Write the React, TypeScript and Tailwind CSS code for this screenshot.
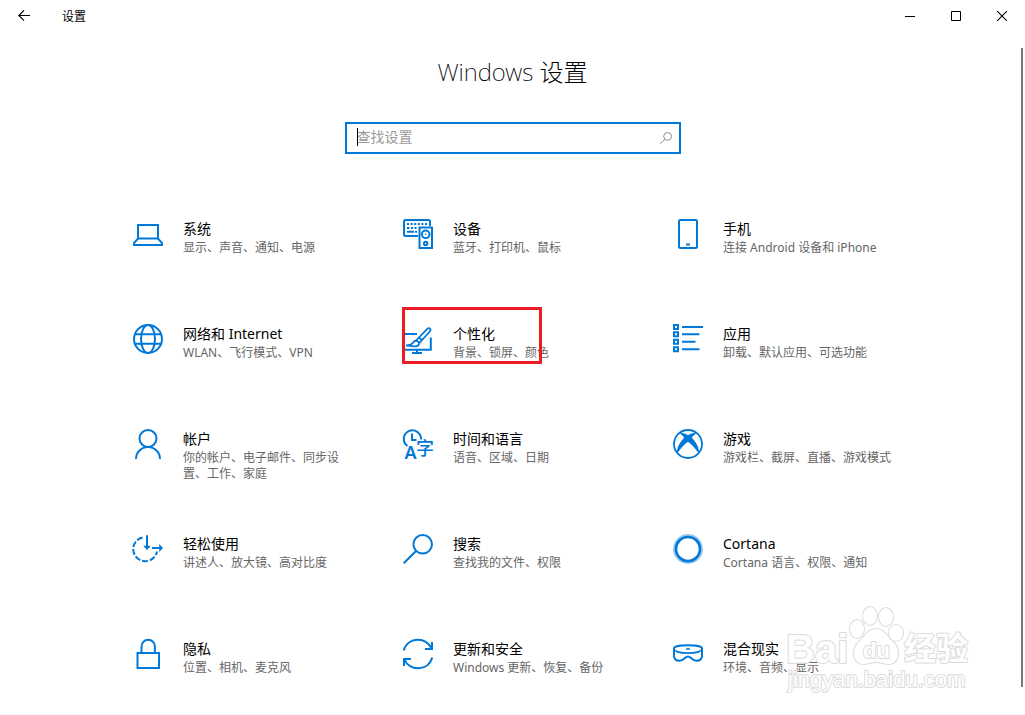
import type { ReactNode } from 'react';

interface Category {
  title: string;
  description: string;
  icon: ReactNode;
  marked?: boolean;
}

const CATEGORIES: Category[] = [
  { title: '系统', description: '显示、声音、通知、电源', icon: <LaptopIcon /> },
  { title: '设备', description: '蓝牙、打印机、鼠标', icon: <DevicesIcon /> },
  { title: '手机', description: '连接 Android 设备和 iPhone', icon: <PhoneIcon /> },
  { title: '网络和 Internet', description: 'WLAN、飞行模式、VPN', icon: <GlobeIcon /> },
  { title: '个性化', description: '背景、锁屏、颜色', icon: <PersonalizeIcon />, marked: true },
  { title: '应用', description: '卸载、默认应用、可选功能', icon: <AppsIcon /> },
  { title: '帐户', description: '你的帐户、电子邮件、同步设置、工作、家庭', icon: <AccountIcon /> },
  { title: '时间和语言', description: '语音、区域、日期', icon: <TimeLanguageIcon /> },
  { title: '游戏', description: '游戏栏、截屏、直播、游戏模式', icon: <GamingIcon /> },
  { title: '轻松使用', description: '讲述人、放大镜、高对比度', icon: <EaseOfAccessIcon /> },
  { title: '搜索', description: '查找我的文件、权限', icon: <SearchIcon /> },
  { title: 'Cortana', description: 'Cortana 语言、权限、通知', icon: <CortanaIcon /> },
  { title: '隐私', description: '位置、相机、麦克风', icon: <LockIcon /> },
  { title: '更新和安全', description: 'Windows 更新、恢复、备份', icon: <UpdateIcon /> },
  { title: '混合现实', description: '环境、音频、显示', icon: <HeadsetIcon /> },
];

export default function App() {
  return (
    <div className="relative min-h-screen overflow-hidden bg-white font-['Noto_Sans','Noto_Sans_CJK_SC',sans-serif] text-black">
      <TitleBar />

      <main className="px-4">
        <h1 className="mt-6 text-center text-2xl leading-8 font-extralight">Windows 设置</h1>
        <SearchBox />
        <CategoryGrid />
      </main>

      {/* Scroll thumb */}
      <div className="absolute top-12 right-0.5 bottom-7 w-0.5 bg-[#767676]" />

      <Watermark />
    </div>
  );
}

function TitleBar() {
  return (
    <header className="flex h-8 items-center">
      <button type="button" aria-label="返回" className="flex h-8 w-12 items-center justify-center">
        <svg width="12" height="12" viewBox="0 0 12 12" fill="none" stroke="#000" strokeWidth="1.1">
          <path d="M12 5.5H.8M6 .3.8 5.5 6 10.7" />
        </svg>
      </button>
      <span className="ml-3.5 flex-1 pt-0.5 text-xs">设置</span>
      <button type="button" aria-label="最小化" className="flex h-8 w-[46px] items-center justify-center">
        <svg width="10" height="10" viewBox="0 0 10 10" stroke="#000">
          <path d="M0 5.5h10" />
        </svg>
      </button>
      <button type="button" aria-label="最大化" className="flex h-8 w-[46px] items-center justify-center">
        <svg width="10" height="10" viewBox="0 0 10 10" fill="none" stroke="#000">
          <path d="M.5.5h9v9h-9z" />
        </svg>
      </button>
      <button type="button" aria-label="关闭" className="flex h-8 w-[46px] items-center justify-center">
        <svg width="10" height="10" viewBox="0 0 10 10" stroke="#000" strokeWidth="1.1">
          <path d="M0 0l10 10M10 0L0 10" />
        </svg>
      </button>
    </header>
  );
}

function SearchBox() {
  return (
    <div className="relative mx-auto mt-[34px] flex h-8 max-w-[336px] items-center border-2 border-[#0078d7] bg-white pr-[7px] pl-2.5">
      <input
        type="text"
        aria-label="查找设置"
        placeholder="查找设置"
        className="min-w-0 flex-1 pb-0.5 text-sm outline-none placeholder:text-[#999]"
      />
      <svg width="12" height="12" viewBox="0 0 12 12" fill="none" stroke="#8c8c8c">
        <circle cx="7.6" cy="4.4" r="3.9" />
        <path d="M4.8 7.2.3 11.7" />
      </svg>
      {/* Text caret */}
      <span className="absolute top-1 left-2.5 h-[18px] w-px bg-black" />
    </div>
  );
}

function CategoryGrid() {
  return (
    <nav className="mx-auto mt-[55px] grid max-w-[811px] auto-rows-[64px] grid-cols-[repeat(auto-fit,270px)] gap-y-[41px]">
      {CATEGORIES.map((category) => (
        <CategoryTile key={category.title} category={category} />
      ))}
    </nav>
  );
}

function CategoryTile({ category }: { category: Category }) {
  return (
    <a href="#" className="relative flex items-start gap-5 pt-2.5 pr-5 pl-[26px]">
      <span className="h-[30px] w-[30px] shrink-0">{category.icon}</span>
      <span className="min-w-0 flex-1">
        <span className="block text-sm leading-5">{category.title}</span>
        <span className="mt-px block text-xs leading-4 text-[#666]">{category.description}</span>
      </span>
      {category.marked && (
        <span className="absolute -top-[7px] left-[25px] h-[57px] w-[140px] border-3 border-[#ed1c24]" />
      )}
    </a>
  );
}

function Icon({ children }: { children: ReactNode }) {
  return (
    <svg
      width="30"
      height="30"
      viewBox="0 0 30 30"
      fill="none"
      stroke="#0078d7"
      strokeWidth="2"
      aria-hidden="true"
      className="overflow-visible"
    >
      {children}
    </svg>
  );
}

function LaptopIcon() {
  return (
    <Icon>
      <path d="M5 20V6h20v14M5 19.5h20l4 4.7V26H1v-1.8z" />
    </Icon>
  );
}

function DevicesIcon() {
  return (
    <Icon>
      <path d="M15 17H2.5Q1 17 1 15.5V2.5Q1 1 2.5 1h23Q27 1 27 2.5V7" />
      <path d="M4 5h20" strokeDasharray="2 1.6" />
      <path d="M4 9h2.5M8 9h2M11.5 9h2M4 12.8h7M12 12.8h2" />
      <path d="M16.5 8.5H29V29H16.5z" />
      <circle cx="22.7" cy="15.3" r="3.8" />
      <circle cx="22.7" cy="15.3" r=".8" fill="#0078d7" stroke="none" />
      <circle cx="22.7" cy="24.5" r="1.7" />
    </Icon>
  );
}

function PhoneIcon() {
  return (
    <Icon>
      <rect x="6" y="1" width="18" height="28" rx="1.5" />
      <path d="M13 25.5h4" />
    </Icon>
  );
}

function GlobeIcon() {
  return (
    <Icon>
      <circle cx="15" cy="15" r="14" />
      <ellipse cx="15" cy="15" rx="7" ry="14" />
      <path d="M2 10.3h26M2 19.7h26" />
    </Icon>
  );
}

function PersonalizeIcon() {
  return (
    <Icon>
      <path d="M0 10h14M27.8 13.5v12.3H0M14 26v3M9 29h10" />
      <path d="M3 21.3c4 0 5.5-.3 7-2.5 1-2 3.200-2.700 5-1.300 1.800 1.500 1.300 3.800-1 4.600-2.500.8-6.500-.1-11-.8z" strokeWidth="1.8" />
      <path d="M13 16.5 23.8 5.3c1.300-1.300 2.500-1.300 3.200-.6s.6 2-.6 3.300L16 19.3M16 13.500l3 2.800" strokeWidth="1.8" />
    </Icon>
  );
}

function AppsIcon() {
  return (
    <Icon>
      <path d="M1 1h4v4H1zM1 8.3h4v4H1zM1 15.7h4v4H1zM1 23.2h4v4H1z" />
      <path d="M9 3h21M9 10.3h17.5M9 17.7h13.5M9 25.2h17.5" />
    </Icon>
  );
}

function AccountIcon() {
  return (
    <Icon>
      <circle cx="15" cy="9.5" r="8.5" />
      <path d="M3 30a12 12 0 0 1 24 0" />
    </Icon>
  );
}

function TimeLanguageIcon() {
  return (
    <Icon>
      <path d="M4.5 17A8.6 8.6 0 1 1 18 10.5M9 4.5V11h4.5" />
      <text x="1.5" y="30" fill="#0078d7" stroke="none" className="font-['Noto_Sans',sans-serif] text-[18px] font-semibold">A</text>
      <text x="13" y="26" fill="#0078d7" stroke="none" className="font-['Noto_Sans_CJK_SC',sans-serif] text-[18px] font-medium">字</text>
    </Icon>
  );
}

function GamingIcon() {
  return (
    <Icon>
      <circle cx="15" cy="15" r="14" strokeWidth="1.8" />
      <path
        d="M6.5 4.5C9.5 3 13 5 15 6.2 17 5 20.5 3 23.5 4.5 21.5 5.3 19.8 7.3 18.8 8.8 22.5 12.5 27 19 25.8 25 24 21.5 19.5 16 15 12.8 10.5 16 6 21.5 4.2 25 3 19 7.5 12.5 11.2 8.8 10.2 7.3 8.5 5.3 6.5 4.5z"
        fill="#0078d7"
        stroke="none"
      />
    </Icon>
  );
}

function EaseOfAccessIcon() {
  return (
    <Icon>
      <path d="M9.5 3.5A12 12 0 1 0 24 17.5" strokeDasharray="6 1.9" />
      <path d="M14 1.3V14M19 14h9" />
      <path d="M10.2 11.8h7.6L14 16zM26.2 10v8l3.8-4z" fill="#0078d7" stroke="none" />
    </Icon>
  );
}

function SearchIcon() {
  return (
    <Icon>
      <circle cx="19.7" cy="10.3" r="9.3" />
      <path d="M13 17 .7 29.3" />
    </Icon>
  );
}

function CortanaIcon() {
  return (
    <Icon>
      <circle cx="15" cy="15" r="14" stroke="#99c9ef" />
      <circle cx="15" cy="15" r="12" strokeWidth="2.6" />
    </Icon>
  );
}

function LockIcon() {
  return (
    <Icon>
      <path d="M4.5 14H26v15H4.5zM8.5 14V7.500a6.700 6.700 0 0 1 13.400 0V14" />
    </Icon>
  );
}

function UpdateIcon() {
  return (
    <Icon>
      <path d="M.8 11.5C4.5-2.5 24-2.5 28.500 9.500M29 3v7h-7" />
      <path d="M29.200 18.500C25.500 32.500 6 32.500 1.500 20.500M1 27v-7h7" />
    </Icon>
  );
}

function HeadsetIcon() {
  return (
    <Icon>
      <path d="M1 9.3C1 5.2 29 5.2 29 9.3v7.500c0 3.700-2.500 5-5.500 5-4.500 0-5.500-4.300-8.500-4.300s-4 4.300-8.500 4.300c-3 0-5.500-1.300-5.500-5z" />
      <path d="M1 9.8c1 5.700 27 5.700 28 0M13 10h4" strokeWidth="1.6" />
    </Icon>
  );
}

function Watermark() {
  return (
    <svg
      width="190"
      height="94"
      viewBox="0 0 190 94"
      aria-hidden="true"
      className="pointer-events-none absolute right-[51px] bottom-[19px] font-['Liberation_Sans','Noto_Sans_CJK_SC',sans-serif] opacity-85"
    >
      <g fill="#fff" stroke="#d6d6d6" strokeWidth="2" strokeLinejoin="round" className="[paint-order:stroke]">
        <text x="2" y="61" className="text-[40px] font-bold">Bai</text>
        <path d="M92 27c-8 0-10 6-16 12-9 8-8 22 3 23 5 0 8-2 13-2s8 2 13 2c11-1 12-15 3-23-6-6-8-12-16-12z" />
        <ellipse cx="86" cy="14" rx="7" ry="9" />
        <ellipse cx="102" cy="15" rx="7" ry="9" />
        <ellipse cx="73" cy="27" rx="7" ry="9" />
        <ellipse cx="112" cy="31" rx="7" ry="8" />
        <text x="79" y="56" className="text-[22px] font-bold">du</text>
        <text x="120" y="58" className="text-[32px] font-bold">经验</text>
        <text x="4" y="85" className="text-[22px]">jingyan.baidu.com</text>
      </g>
    </svg>
  );
}
